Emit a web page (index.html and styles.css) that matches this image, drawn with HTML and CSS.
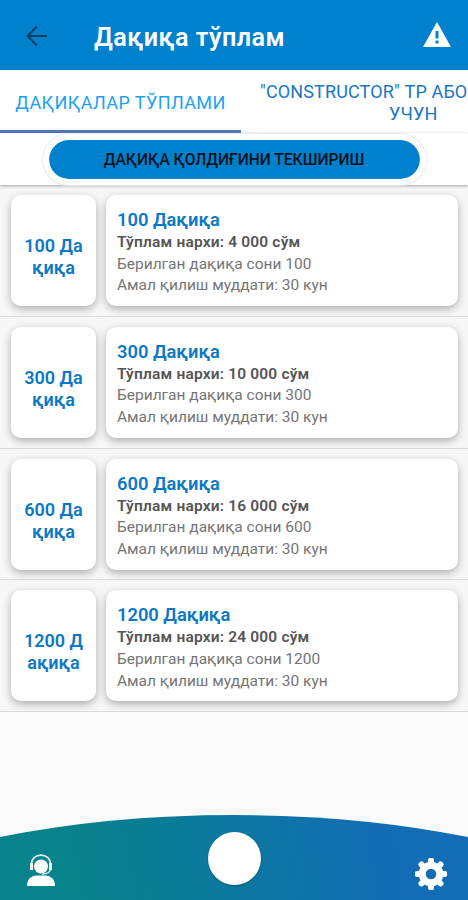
FILE: index.html
```html
<!DOCTYPE html>
<html lang="uz">
<head>
    <meta charset="utf-8">
    <title>Дақиқа тўплам</title>
    <link rel="stylesheet" href="styles.css">
</head>
<body>
    <header class="header">
        <svg class="back" viewBox="0 0 22 22"><path d="M21 11H2M11 1.5L1.5 11L11 20.500"/></svg>
        <h1>Дақиқа тўплам</h1>
        <svg class="warning" viewBox="0 0 28 25"><path fill-rule="evenodd" d="M14 0L28 25H0ZM12.500 9V16.500H15.500V9ZM12.500 18.500V21.500H15.500V18.500Z"/></svg>
    </header>

    <nav class="tabs">
        <div class="tab active"><span>ДАҚИҚАЛАР ТЎПЛАМИ</span></div>
        <div class="tab next">
            <span>"CONSTRUCTOR" ТР АБО</span>
            <span class="second">УЧУН</span>
        </div>
    </nav>

    <div class="check">
        <button class="check-btn"><span>ДАҚИҚА ҚОЛДИҒИНИ ТЕКШИРИШ</span></button>
    </div>

    <main class="list">
        <section class="row">
            <div class="card amount"><span>100 Да<br>қиқа</span></div>
            <div class="card info">
                <h2>100 Дақиқа</h2>
                <p class="price">Тўплам нархи: 4 000 сўм</p>
                <p>Берилган дақиқа сони 100</p>
                <p>Амал қилиш муддати: 30 кун</p>
            </div>
        </section>
        <section class="row">
            <div class="card amount"><span>300 Да<br>қиқа</span></div>
            <div class="card info">
                <h2>300 Дақиқа</h2>
                <p class="price">Тўплам нархи: 10 000 сўм</p>
                <p>Берилган дақиқа сони 300</p>
                <p>Амал қилиш муддати: 30 кун</p>
            </div>
        </section>
        <section class="row">
            <div class="card amount"><span>600 Да<br>қиқа</span></div>
            <div class="card info">
                <h2>600 Дақиқа</h2>
                <p class="price">Тўплам нархи: 16 000 сўм</p>
                <p>Берилган дақиқа сони 600</p>
                <p>Амал қилиш муддати: 30 кун</p>
            </div>
        </section>
        <section class="row">
            <div class="card amount"><span>1200 Д<br>ақиқа</span></div>
            <div class="card info">
                <h2>1200 Дақиқа</h2>
                <p class="price">Тўплам нархи: 24 000 сўм</p>
                <p>Берилган дақиқа сони 1200</p>
                <p>Амал қилиш муддати: 30 кун</p>
            </div>
        </section>
    </main>

    <footer class="footer">
        <svg class="curve" viewBox="0 0 468 86" preserveAspectRatio="none">
            <defs>
                <linearGradient id="sea" gradientUnits="userSpaceOnUse" x1="80" y1="70" x2="390" y2="10">
                    <stop offset="0" stop-color="#08828b"/>
                    <stop offset="0.500" stop-color="#0c78a0"/>
                    <stop offset="1" stop-color="#126cb6"/>
                </linearGradient>
            </defs>
            <path fill="url(#sea)" d="M0 23Q110 1 234 1T468 23V86H0Z"/>
        </svg>
        <svg class="operator" viewBox="0 0 28 32">
            <path d="M0 32C0 25 4 22 10 21.500H18C24 22 28 25 28 32Z"/>
            <circle cx="14" cy="12.500" r="7"/>
            <path class="band" d="M4.500 15V10.500C4.500 -2 23.500 -2 23.500 10.500V15C23.500 18 20 20 15 20"/>
            <path d="M3 9H6V16H3ZM22 9H25V16H22Z"/>
        </svg>
        <div class="home"></div>
        <svg class="gear" viewBox="0 0 32 32">
            <circle class="ring" cx="16" cy="16" r="8.800"/>
            <g class="teeth">
                <path d="M16 2.500V5M16 27V29.500M2.500 16H5M27 16H29.500"/>
                <path d="M6.500 6.500L8 8M24 24L25.500 25.500M6.500 25.500L8 24M24 8L25.500 6.500"/>
            </g>
        </svg>
    </footer>
</body>
</html>
```

FILE: styles.css
```css
body {
    margin: 0;
    height: 900px;
    display: flex;
    flex-direction: column;
    overflow: hidden;
    background-color: #fafafa;
    font-family: Roboto, "Noto Sans", sans-serif;
}

h1, h2, p {
    margin: 0;
}

.header {
    height: 70px;
    flex: none;
    display: flex;
    align-items: center;
    box-sizing: border-box;
    padding: 2px 17px 0 26px;
    background-color: #0081cd;
}

.back {
    width: 22px;
    height: 22px;
    fill: none;
    stroke: #0b3e60;
    stroke-width: 2;
}

h1 {
    flex: 1;
    margin-left: 46px;
    padding-top: 3px;
    color: #fff;
    font-size: 25.2px;
    line-height: 32px;
    font-weight: 600;
    letter-spacing: 0.45px;
}

.warning {
    width: 28px;
    height: 25px;
    margin-bottom: 3px;
    fill: #fff;
}

.tabs {
    height: 63px;
    flex: none;
    display: flex;
    background-color: #fff;
    font-size: 18px;
    line-height: 22px;
    white-space: nowrap;
}

.tab {
    flex: none;
    box-sizing: border-box;
}

.active {
    width: 241px;
    padding-top: 22px;
    border-bottom: 3px solid #5078bd;
    color: #1ba1f3;
    letter-spacing: 0.4px;
    text-align: center;
}

.next {
    width: 227px;
    display: flex;
    flex-direction: column;
    padding: 11px 0 0 19px;
    color: #1976c4;
    letter-spacing: 0.14px;
}

.second {
    padding-left: 129px;
}

.check {
    height: 52px;
    flex: none;
    display: flex;
    justify-content: center;
    align-items: center;
    background-color: #fff;
    box-shadow: 0 1px 3px rgba(0, 0, 0, 0.35);
    z-index: 1;
}

.check-btn {
    box-sizing: content-box;
    width: 371px;
    height: 38px;
    padding: 1px 0 0;
    border: 6px solid #fff;
    border-radius: 26px;
    background-color: #0081cd;
    background-clip: padding-box;
    box-shadow: 0 0 1px 1px #e6eaed;
    color: #06111b;
    font-family: inherit;
    font-size: 15.6px;
    font-weight: 500;
}

.row {
    height: 131.8px;
    display: flex;
    gap: 10px;
    box-sizing: border-box;
    padding: 10px 10px 0 11px;
    border-bottom: 1px solid #dadada;
    background-color: #f7f7f7;
}

.card {
    height: 111px;
    box-sizing: border-box;
    border-radius: 10px;
    background-color: #fff;
    box-shadow: 0 3px 8px rgba(0, 0, 0, 0.3);
}

.amount {
    width: 85px;
    flex: none;
    display: flex;
    align-items: center;
    justify-content: center;
    padding-top: 13px;
    color: #0b78c6;
    font-size: 18px;
    line-height: 22px;
    font-weight: 600;
    text-align: center;
}

.info {
    flex: 1;
    padding: 14px 11px 0;
    color: #757575;
    font-size: 15.5px;
    line-height: 21.6px;
}

.info h2 {
    margin-bottom: 1px;
    color: #0b78c6;
    font-size: 18.3px;
    line-height: 22px;
    font-weight: 600;
}

.price {
    color: #555;
    font-weight: 600;
    letter-spacing: 0.18px;
}

.footer {
    position: relative;
    height: 86px;
    flex: none;
    display: flex;
    align-items: flex-start;
    justify-content: space-between;
    box-sizing: border-box;
    margin-top: auto;
    padding: 0 21px 0 27px;
}

.curve {
    position: absolute;
    inset: 0;
    width: 100%;
    height: 100%;
}

.operator, .home, .gear {
    position: relative;
    fill: #fff;
}

.operator {
    width: 28px;
    height: 32px;
    margin-top: 40px;
}

.band {
    fill: none;
    stroke: #e1f2f4;
    stroke-width: 1.6;
}

.home {
    width: 53px;
    height: 53px;
    margin: 18px 2px 0 0;
    border-radius: 50%;
    background-color: #fff;
    box-shadow: 0 1px 2px rgba(0, 0, 0, 0.25);
}

.gear {
    width: 32px;
    height: 32px;
    margin-top: 44px;
}

.ring {
    fill: none;
    stroke: #fff;
    stroke-width: 7;
}

.teeth {
    stroke: #fff;
    stroke-width: 6;
    stroke-linecap: round;
}
```
